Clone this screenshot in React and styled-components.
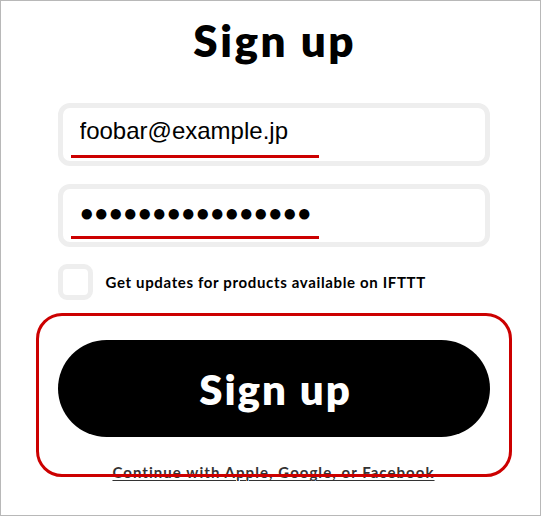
import React from 'react';
import styled, { createGlobalStyle } from 'styled-components';

const GlobalStyle = createGlobalStyle`
	html, body {
		margin: 0;
		background: #fff;
	}
	* {
		box-sizing: border-box;
	}
`;

const Frame = styled.div`
	width: 541px;
	height: 516px;
	border: 1px solid #b8b8b8;
	display: flex;
	flex-direction: column;
	align-items: center;
	padding: 13px 0 0 6px;
	font-family: Lato, 'Noto Sans', sans-serif;
	color: #000;
	overflow: hidden;
`;

const Title = styled.h1`
	margin: 0;
	font-size: 44px;
	line-height: 52px;
	font-weight: 800;
	letter-spacing: 2.5px;
	padding-left: 2.5px;
`;

const Form = styled.form`
	width: 432px;
	display: flex;
	flex-direction: column;
	margin-top: 37px;
`;

const Field = styled.div`
	position: relative;
	height: 63px;
	border: 5px solid #eeeeee;
	border-radius: 12px;
	margin-bottom: ${props => props.gap || 0}px;

	/* red squiggle stand-in under the typed value */
	&::after {
		content: '';
		position: absolute;
		left: 8px;
		bottom: 3px;
		width: 248px;
		height: 3px;
		background: #cc0000;
	}
`;

const Input = styled.input`
	width: 100%;
	height: 100%;
	border: 0;
	outline: 0;
	background: transparent;
	padding: 0 0 ${props => props.lift || 0}px 17px;
	font-family: 'Liberation Sans', Arial, sans-serif;
	font-size: 24px;
	color: #000;
`;

const CheckRow = styled.label`
	display: flex;
	align-items: center;
	gap: 13px;
	margin-top: 17px;
`;

const CheckBox = styled.span`
	width: 35px;
	height: 36px;
	border: 5px solid #eeeeee;
	border-radius: 9px;
	flex-shrink: 0;
`;

const CheckText = styled.span`
	font-size: 15px;
	font-weight: 700;
	letter-spacing: 0.65px;
`;

const Action = styled.div`
	position: relative;
	margin-top: 40px;
	display: flex;
	flex-direction: column;
	align-items: center;

	/* highlight annotation around the call to action */
	&::after {
		content: '';
		position: absolute;
		left: -22px;
		right: -22px;
		top: -27px;
		height: 158px;
		border: 3px solid #cc0000;
		border-radius: 26px;
		pointer-events: none;
	}
`;

const Button = styled.button`
	width: 432px;
	height: 97px;
	border: 0;
	border-radius: 49px;
	background: #000;
	color: #fff;
	font-family: Lato, 'Noto Sans', sans-serif;
	font-size: 42px;
	font-weight: 800;
	letter-spacing: 2px;
	padding: 0 0 0 4px;
	cursor: pointer;
`;

const Alt = styled.a`
	margin-top: 26px;
	font-size: 15px;
	font-weight: 700;
	letter-spacing: 1.05px;
	color: #333;
	text-decoration: underline;
	text-decoration-thickness: 1px;
	text-underline-offset: 2px;
`;

const App = () => (
	<>
		<GlobalStyle />
		<Frame>
			<Title>Sign up</Title>
			<Form onSubmit={e => e.preventDefault()}>
				<Field gap={18}>
					<Input type="email" readOnly value="foobar@example.jp" lift={8} />
				</Field>
				<Field>
					<Input type="text" readOnly value={'●'.repeat(16)} lift={6} />
				</Field>
				<CheckRow>
					<CheckBox />
					<CheckText>Get updates for products available on IFTTT</CheckText>
				</CheckRow>
				<Action>
					<Button type="submit">Sign up</Button>
					<Alt href="#">Continue with Apple, Google, or Facebook</Alt>
				</Action>
			</Form>
		</Frame>
	</>
);

export default App;
